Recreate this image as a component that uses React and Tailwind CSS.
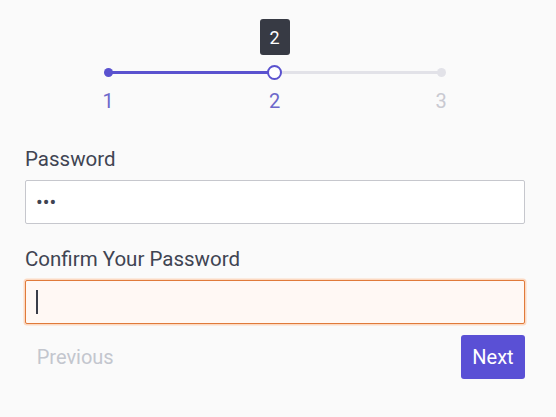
export default function App() {
  return (
    <div className="w-[556px] h-[417px] bg-[#fafafa] overflow-hidden" style={{ fontFamily: "Roboto, 'Liberation Sans', sans-serif" }}>
      <div className="ml-[25px] w-[500px] pt-[19px] flex flex-col">
        {/* range slider */}
        <div className="ml-[73px] w-[353px] flex flex-col">
          <div className="flex justify-center">
            <div className="w-[30px] h-[36px] bg-[#373a44] rounded-[3px] flex items-center justify-center text-white text-[18px]">2</div>
          </div>
          <div className="mt-[10px] h-[14px] px-[10px] flex items-center">
            <div className="relative flex-1 h-[3px] bg-[#e2e2e8] rounded-full">
              <div className="absolute left-0 top-0 h-[3px] w-1/2 bg-[#5a52cf]" />
              <div className="absolute left-[-4.5px] top-[-3px] w-[9px] h-[9px] rounded-full bg-[#5a52cf]" />
              <div className="absolute right-[-4.5px] top-[-3px] w-[9px] h-[9px] rounded-full bg-[#e2e2e8]" />
              <div className="absolute left-[calc(50%-7.5px)] top-[-6px] w-[15px] h-[15px] rounded-full bg-white border-[2.5px] border-[#5a52cf]" />
            </div>
          </div>
          <div className="mt-[9.5px] flex justify-between text-[20px] leading-[24px]">
            <span className="w-[20px] text-center text-[#6d68ca]">1</span>
            <span className="w-[20px] text-center text-[#6d68ca]">2</span>
            <span className="w-[20px] text-center text-[#c9c9d1]">3</span>
          </div>
        </div>

        {/* password */}
        <label className="mt-[34.5px] text-[20.5px] leading-[24px] text-[#404452]">Password</label>
        <div className="mt-[9px] h-[44px] bg-white border border-[#c6c7cd] rounded-[2px] flex items-center pl-[10px] text-[#404452] text-[20px]">
          •••
        </div>

        <label className="mt-[22.7px] text-[20.5px] leading-[24px] text-[#404452]">Confirm Your Password</label>
        <div className="mt-[9.3px] h-[44px] bg-[#fff8f4] border border-[#e07a3a] rounded-[2px] shadow-[0_0_0_1.5px_#fcd9c2] flex items-center pl-[10px]">
          <div className="w-[2px] h-[24px] bg-[#3a3d48]" />
        </div>

        <div className="mt-[11px] flex items-center justify-between">
          <button className="pl-[11.7px] pt-[1px] text-[20px] leading-[24px] text-[#c3c6ce]">Previous</button>
          <button className="w-[64px] h-[44px] bg-[#5a50d5] rounded-[3px] flex items-center justify-center text-white text-[20px]">Next</button>
        </div>
      </div>
    </div>
  );
}
